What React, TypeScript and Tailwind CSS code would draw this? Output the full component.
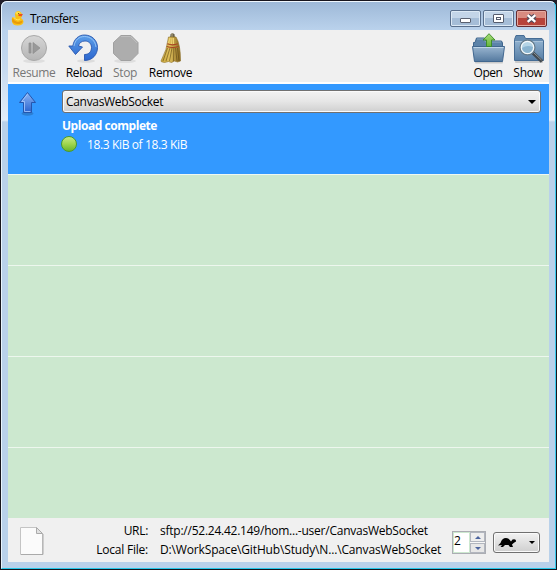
import React from 'react';

function Duck() {
  return (
    <svg width="14" height="17" viewBox="0 0 14 17">
      <path d="M1.500 7 Q0 9 1 12 Q2 15.500 6.500 15.500 Q12.500 15.500 12.500 11.500 Q12.500 9.500 10 8 Q12 5.500 10.500 3 Q8.500 .3 6 1.200 Q3 3 4.300 6.300 L4.500 8 Z" fill="#fac116" />
      <path d="M1.500 8 Q3.500 11.500 7 12 L11.500 10.500 Q12 13 8.500 14 Q2.500 14.500 1 11 Z" fill="#e99b09" />
      <path d="M3 7.500 Q4 9.500 7 10 L9 9" stroke="#ffe65c" fill="none" />
      <ellipse cx="7" cy="3" rx="2.500" ry="1.500" fill="#ffdf45" />
      <path d="M7.500 4 L12 4 L10.500 6.200 L7.500 6 Z" fill="#ee511c" />
      <circle cx="7.700" cy="3.500" r=".6" fill="#553600" />
    </svg>
  );
}

function ResumeIcon() {
  return (
    <svg width="32" height="32" viewBox="0 0 32 32">
      <defs><linearGradient id="resume" x2="0" y2="1"><stop stopColor="#d6d6d6" /><stop offset="1" stopColor="#b5b5b5" /></linearGradient></defs>
      <ellipse cx="16" cy="28" rx="11" ry="2" fill="#dedede" />
      <circle cx="16" cy="15" r="12.500" fill="url(#resume)" stroke="#a9a9a9" />
      <path d="M11 10h2v10h-2zM15 9.500l7 5.500-7 5.500z" fill="#999" stroke="#8c8c8c" strokeWidth=".7" />
    </svg>
  );
}

function ReloadIcon() {
  return (
    <svg width="32" height="32" viewBox="0 0 32 32">
      <defs><linearGradient id="reload" x2="0" y2="1"><stop stopColor="#5c9fe9" /><stop offset="1" stopColor="#2b66cf" /></linearGradient></defs>
      <ellipse cx="18" cy="28" rx="9" ry="1.800" fill="#dcdcdc" />
      <path d="M.8 13 L4.800 13 C6 6 10.500 2 16.500 2 C24 2 29.500 7.500 29.500 14.500 C29.500 21.500 24.500 27.500 16.500 27.500 L16.500 21.500 C21 21.500 23.500 18.500 23.500 14.500 C23.500 10.500 20.500 8 17 8 C13.500 8 11 10 10.500 13 L14.500 14 L7.500 21.500 Z" fill="url(#reload)" stroke="#2856ae" strokeWidth=".9" />
      <path d="M6 13 C7 7 11 3.500 16.500 3.500 C22.500 3.500 27.500 8 28 14" fill="none" stroke="#9bc7f7" strokeWidth=".9" />
    </svg>
  );
}

function StopIcon() {
  return (
    <svg width="32" height="32" viewBox="0 0 32 32">
      <ellipse cx="16" cy="28" rx="11" ry="2" fill="#dedede" />
      <path d="M12 2.500h10l7 7v11l-7 7H12l-7.500-7v-11z" fill="#adadad" stroke="#a0a0a0" />
      <path d="M12 3.500h9.500l6.500 6.500" fill="none" stroke="#bebebe" />
    </svg>
  );
}

function BroomIcon() {
  return (
    <svg width="32" height="32" viewBox="0 0 32 32">
      <defs><linearGradient id="broom"><stop stopColor="#cba93d" /><stop offset=".45" stopColor="#dfc05c" /><stop offset="1" stopColor="#87661f" /></linearGradient></defs>
      <path d="M15.500 1.500Q17.500 -1 19.500 1.500L20 5H15z" fill="#67614c" /><path d="M17 .5v4" stroke="#b8aa80" />
      <path d="M13.500 4h7.500q4.500 7 4.500 24l-3 1-3-1-3 1.500-3-1-4 1-3-.7L6 28Q12 17 13.500 4z" fill="url(#broom)" stroke="#896b21" strokeWidth=".6" />
      <path d="M12.500 15L8 28M15 15l-4 13M17 15l-2.500 13M18.800 15l-.3 13M20.500 15l1.500 13M22.500 15l1.500 13" stroke="#5f4814" strokeWidth=".6" />
      <path d="M15 5l-1.500 5M17 5l-.5 6M18.500 5v6" stroke="#f2d777" strokeWidth=".9" />
      <path d="M12.300 10.800q5 2 10.500 0M11.700 13.500q6 2 11.800 0" fill="none" stroke="#a84422" strokeWidth="1.200" />
    </svg>
  );
}

function OpenIcon() {
  return (
    <svg width="34" height="32" viewBox="0 0 34 32">
      <defs>
        <linearGradient id="folderOpen" x2="0" y2="1"><stop stopColor="#9ab6d0" /><stop offset="1" stopColor="#54799f" /></linearGradient>
        <linearGradient id="up" x2="0" y2="1"><stop stopColor="#a9dc79" /><stop offset="1" stopColor="#65b63c" /></linearGradient>
      </defs>
      <rect x="4" y="27.500" width="28" height="3" rx="1" fill="#c9c9c9" />
      <path d="M2.500 16V9.500H4l1.500-4.500h8L15 8h15.500l1 2v6z" fill="#5c83a9" stroke="#3f658c" />
      <path d="M6 6h7l1.500 3H30" fill="none" stroke="#85a5c3" />
      <path d="M1.500 13.500h32L31.500 28.500h-28z" fill="url(#folderOpen)" stroke="#41678f" />
      <path d="M2.500 14.500h30" stroke="#bfd5e8" />
      <path d="M18 .7L24 7h-3.500v6.500h-5V7H12z" fill="url(#up)" stroke="#398b22" strokeWidth=".9" />
    </svg>
  );
}

function ShowIcon() {
  return (
    <svg width="32" height="32" viewBox="0 0 32 32">
      <defs><linearGradient id="folderFind" x2="0" y2="1"><stop stopColor="#8eafcd" /><stop offset="1" stopColor="#587fa6" /></linearGradient></defs>
      <rect x="3" y="27" width="28" height="3" rx="1" fill="#cacaca" />
      <path d="M2.500 27.500V6.500L4 2.500h8L13.500 5.500h16.500l1.500 2v20z" fill="#658bb0" stroke="#456c94" />
      <path d="M3 8.500h28v18.500H3z" fill="url(#folderFind)" />
      <path d="M3 8.500h28" stroke="#a9c2d9" />
      <path d="M21 20l9 8.500" stroke="#424a50" strokeWidth="3.500" />
      <path d="M21.500 19.500l8 7.500" stroke="#8d969b" strokeWidth="1" />
      <circle cx="15.500" cy="14.500" r="7.300" fill="#8eb7d3" stroke="#647988" strokeWidth="1.500" />
      <circle cx="15.500" cy="14.500" r="6.200" fill="#b4d4e6" stroke="#f5f9fb" strokeWidth="1.300" />
      <path d="M10 15Q15 11.500 21 14Q20 20 15 20Q10.500 19 10 15" fill="#8ab4d0" />
    </svg>
  );
}

function ToolItem({ label, icon, className, textClass }: { label: string; icon: React.ReactNode; className: string; textClass: string }) {
  return (
    <div className={'flex shrink-0 flex-col items-center ' + className}>
      <div className="flex h-8 justify-center">{icon}</div>
      <span className={'h-4 whitespace-nowrap leading-4 ' + textClass}>{label}</span>
    </div>
  );
}

function Triangle({ up = false, className = 'text-black', width = 8 }: { up?: boolean; className?: string; width?: number }) {
  return <svg className={className} width={width} height={width / 2} viewBox="0 0 8 4"><path d={up ? 'M0 4L4 0L8 4z' : 'M0 0h8L4 4z'} fill="currentColor" /></svg>;
}

export default function App() {
  return (
    <div className="h-[570px] w-[557px] overflow-hidden bg-[#211e29] font-['Open_Sans','Noto_Sans',sans-serif] text-[12px] text-black">
      <div className="flex h-full w-full flex-col rounded-t-[7px] border border-[#17151d] bg-[linear-gradient(to_bottom,#9db8d7_0px,#bad2ec_29px,#c7daf0_70px,#e3edf8_119px,#b9d1ea_121px,#b9d1ea_100%)]">
        <div className="flex h-full flex-col rounded-t-[6px] border-x border-t border-b border-l-[#e8f4fd] border-r-[#39cbee] border-t-[#eff6fd] border-b-[#25c7e9] px-[6px]">
          <header className="flex h-7 shrink-0 items-start">
            <div className="ml-[3px] mt-[8px] w-[14px]"><Duck /></div>
            <span className="ml-[5px] mt-[9px] leading-4 tracking-[-0.5px]">Transfers</span>
            <div className="ml-auto mr-[2px] mt-[8px] flex gap-[2px]">
              <div className="flex h-[17px] w-[31px] items-center justify-center rounded-[2px] border border-[#596f8c] bg-linear-to-b from-[#c3d5e8] from-50% to-[#a5bdd7] to-50% shadow-[inset_0_0_0_1px_#dce9f5]">
                <span className="mt-1 h-[5px] w-[11px] rounded-[1px] border border-[#59606f] bg-white" />
              </div>
              <div className="flex h-[17px] w-[31px] items-center justify-center rounded-[2px] border border-[#596f8c] bg-linear-to-b from-[#c3d5e8] from-50% to-[#a5bdd7] to-50% shadow-[inset_0_0_0_1px_#dce9f5]">
                <span className="flex h-[9px] w-[11px] items-center justify-center rounded-[1px] border border-[#555c6d] bg-white"><i className="h-[3px] w-[5px] border border-[#555c6d]" /></span>
              </div>
              <div className="flex h-[17px] w-[31px] items-center justify-center rounded-[2px] border border-[#672c31] bg-linear-to-b from-[#d88b80] from-50% to-[#b7433a] to-50% shadow-[inset_0_0_0_1px_#e5aaa0]">
                <svg width="13" height="11" viewBox="0 0 13 11"><path d="M3 2.500l7 6M10 2.500l-7 6" stroke="#4f4b5a" strokeWidth="4.500" /><path d="M2.700 2.200l7.600 6.600M10.300 2.200l-7.600 6.600" stroke="white" strokeWidth="2.300" /></svg>
              </div>
            </div>
          </header>
          <main className="flex h-[532px] shrink-0 flex-col bg-[#f0f0f0]">
            <nav className="flex h-[54px] shrink-0 border-b-2 border-white pt-[3px]">
              <ToolItem className="w-[52px]" textClass="text-[#777] tracking-[-0.35px]" label="Resume" icon={<ResumeIcon />} />
              <ToolItem className="w-[48px]" textClass="tracking-[-0.3px]" label="Reload" icon={<ReloadIcon />} />
              <ToolItem className="w-[34px]" textClass="text-[#777] tracking-[-0.3px]" label="Stop" icon={<StopIcon />} />
              <ToolItem className="w-[57px]" textClass="tracking-[-0.3px]" label="Remove" icon={<BroomIcon />} />
              <div className="ml-auto flex pr-[1px]">
                <ToolItem className="w-[40px]" textClass="tracking-[-0.5px]" label="Open" icon={<OpenIcon />} />
                <ToolItem className="w-[40px]" textClass="tracking-[-0.3px]" label="Show" icon={<ShowIcon />} />
              </div>
            </nav>
            <section className="flex h-[91px] shrink-0 border-b border-[#eff8f1] bg-[#3399ff]">
              <div className="ml-[10px] mt-[7px] w-[20px]">
                <svg width="20" height="26" viewBox="0 0 20 26">
                  <defs><linearGradient id="arrow" x2="0" y2="1"><stop stopColor="#8fb8f6" /><stop offset="1" stopColor="#2861ce" /></linearGradient></defs>
                  <ellipse cx="9.500" cy="22.500" rx="6" ry="2.200" fill="#2c7fd3" />
                  <path d="M9.500 1.500L17.500 11.500H13.500V21.500H5.500V11.500H1.500z" fill="url(#arrow)" stroke="#2456ae" />
                  <path d="M9.500 3.200L3.800 10.500h2.700v10h6" fill="none" stroke="#a9ccff" strokeWidth=".8" />
                </svg>
              </div>
              <div className="ml-[24px] mt-[6px] flex w-[479px] flex-col">
                <div className="flex h-[23px] shrink-0 items-center justify-between rounded-[3px] border border-[#707070] bg-linear-to-b from-[#f2f2f2] from-0% via-[#e6e6e6] via-50% to-[#cfcfcf] pl-[3px] pr-[4px] shadow-[inset_0_0_0_1px_#fafafa]">
                  <span className="tracking-[-0.32px]">CanvasWebSocket</span><Triangle />
                </div>
                <span className="mt-[4px] h-4 self-start pt-px font-bold leading-4 tracking-[-0.45px] text-white">Upload complete</span>
                <div className="mt-[2px] flex h-[18px] items-center">
                  <span className="ml-[-1px] h-[16px] w-[16px] rounded-full border border-[#4c9b28] bg-linear-to-b from-[#c7e982] via-[#9fd64d] to-[#69b62d]" />
                  <span className="ml-[10px] pt-[2px] tracking-[-0.37px] text-white">18.3 KiB of 18.3 KiB</span>
                </div>
              </div>
            </section>
            <section className="flex h-[343px] shrink-0 flex-col bg-[#cce8cf]">
              <div className="h-[91px] border-b border-[#edf7ee]" />
              <div className="h-[91px] border-b border-[#edf7ee]" />
              <div className="h-[91px] border-b border-[#edf7ee]" />
            </section>
            <footer className="flex h-[44px] shrink-0">
              <svg className="ml-[12px] mt-[9px]" width="24" height="29" viewBox="0 0 24 29">
                <path d="M.5.500h16l6 6v21H.5z" fill="#fbfbfb" stroke="#c4c4c4" /><path d="M1 27.500h22V7" fill="none" stroke="#aaa" /><path d="M16.500.5v6h6z" fill="#e1e1e1" stroke="#aaa" />
              </svg>
              <div className="mt-[3px] flex w-[104px] flex-col items-end">
                <span className="h-[19px] leading-[19px] tracking-[-0.3px]">URL:</span><span className="h-[19px] leading-[19px] tracking-[-0.23px]">Local File:</span>
              </div>
              <div className="ml-[12px] mt-[3px] flex w-[292px] flex-col items-start whitespace-nowrap">
                <span className="h-[19px] leading-[19px] tracking-[-0.24px]">sftp://52.24.42.149/hom...-user/CanvasWebSocket</span>
                <span className="h-[19px] leading-[19px] tracking-[-0.15px]">D:\WorkSpace\GitHub\Study\N...\CanvasWebSocket</span>
              </div>
              <div className="mt-[13px] flex h-[23px] w-[34px] border border-[#abadb3] bg-white">
                <span className="w-[16px] border border-r-0 border-[#cce8cf] leading-[16px]">2</span>
                <div className="flex w-[16px] flex-col gap-px border-l border-[#cce8cf] bg-[#f7f7f7]">
                  <span className="flex h-[10px] items-center justify-center border border-[#b2b6bf] bg-[#eee]"><Triangle up width={6} className="text-[#4d659f]" /></span>
                  <span className="flex h-[10px] items-center justify-center border border-[#b2b6bf] bg-[#e7e7e7]"><Triangle width={6} className="text-[#4d659f]" /></span>
                </div>
              </div>
              <div className="ml-[7px] mt-[14px] flex h-[21px] w-[47px] items-center rounded-[3px] border border-[#707070] bg-linear-to-b from-[#f2f2f2] to-[#cfcfcf] shadow-[inset_0_0_0_1px_#fafafa]">
                <svg className="ml-[4px]" width="19" height="11" viewBox="0 0 19 11"><path d="M0 8.500L2.500 6Q4 1 8 1Q11 1 13 4.500L14.500 2.500Q18.500 1.500 18 4.500Q16 5.500 14 7.500L15 10H12L10.500 8H7L5 10H2.500L4 8z" fill="#000" /></svg>
                <Triangle width={6} className="ml-auto mr-[4px] text-black" />
              </div>
            </footer>
          </main>
        </div>
      </div>
    </div>
  );
}
